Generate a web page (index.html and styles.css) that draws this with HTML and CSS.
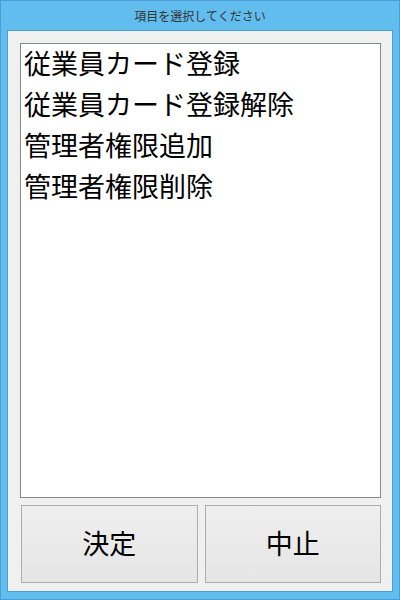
FILE: index.html
```html
<!DOCTYPE html>
<html lang="ja">
<head>
    <meta charset="UTF-8">
    <meta name="viewport" content="width=device-width, initial-scale=1.0">
    <title>項目を選択してください</title>
    <link rel="stylesheet" href="styles.css">
</head>
<body>
    <div class="window">
        <div class="caption">項目を選択してください</div>
        <div class="client">
            <ul class="list">
                <li>従業員カード登録</li>
                <li>従業員カード登録解除</li>
                <li>管理者権限追加</li>
                <li>管理者権限削除</li>
            </ul>
            <div class="buttons">
                <button>決定</button>
                <button>中止</button>
            </div>
        </div>
    </div>
</body>
</html>
```

FILE: styles.css
```css
html, body {
    margin: 0;
    height: 100%;
}
body {
    font-family: "Noto Sans CJK JP", "Noto Sans", sans-serif;
}
.window {
    box-sizing: border-box;
    width: 400px;
    height: 600px;
    background: #62bdef;
    border: 1px solid #4a9fd6;
    padding: 0 6px 7px 6px;
    display: flex;
    flex-direction: column;
}
.caption {
    height: 29px;
    line-height: 29px;
    text-align: center;
    font-size: 12px;
    color: #333;
}
.client {
    flex: 1;
    background: #f0f0f0;
    border: 1px solid #4a9fd6;
    padding: 12px 11px 8px 12px;
    display: flex;
    flex-direction: column;
    gap: 7px;
}
.list {
    flex: 1;
    margin: 0;
    padding: 0 0 0 3px;
    list-style: none;
    background: #fff;
    border: 1px solid #828790;
}
.list li {
    font-size: 27px;
    height: 41px;
    line-height: 37px;
    color: #000;
    white-space: nowrap;
}
.buttons {
    display: flex;
    gap: 7px;
    padding-left: 1px;
}
.buttons button {
    flex: 1;
    height: 78px;
    padding: 0 0 4px 0;
    font-family: inherit;
    font-size: 27px;
    color: #000;
    background: linear-gradient(#efefef, #e5e5e5);
    border: 1px solid #adadad;
    border-radius: 0;
}
```
